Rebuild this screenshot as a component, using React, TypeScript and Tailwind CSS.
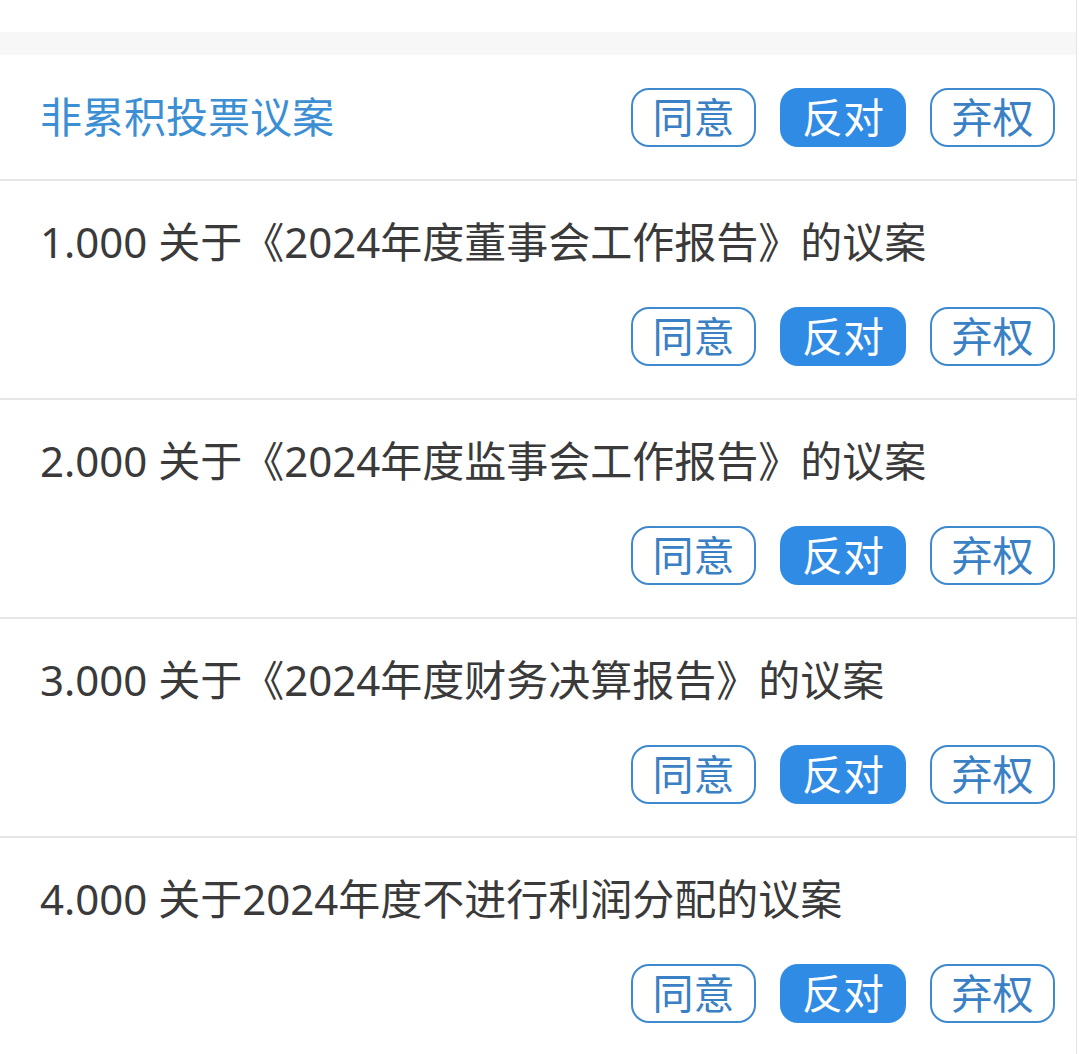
import React from 'react';

const font = { fontFamily: '"Noto Sans", "Noto Sans CJK SC", sans-serif' };

const proposals = [
  '1.000 关于《2024年度董事会工作报告》的议案',
  '2.000 关于《2024年度监事会工作报告》的议案',
  '3.000 关于《2024年度财务决算报告》的议案',
  '4.000 关于2024年度不进行利润分配的议案',
];

const VoteButtons = () => (
  <div className="flex items-center gap-[24px]">
    <div className="w-[125px] h-[59px] rounded-[18px] border-2 border-[#3f89cf] text-[#3a80c4] text-[41px] flex items-center justify-center leading-none">
      同意
    </div>
    <div className="w-[126px] h-[59px] rounded-[18px] bg-[#2f8be4] text-white text-[41px] flex items-center justify-center leading-none">
      反对
    </div>
    <div className="w-[125px] h-[59px] rounded-[18px] border-2 border-[#3f89cf] text-[#3a80c4] text-[41px] flex items-center justify-center leading-none">
      弃权
    </div>
  </div>
);

export default function App() {
  return (
    <div className="w-[1079px] h-[1054px] bg-white overflow-hidden" style={font}>
      <div className="w-[1077px] h-full border-r border-[#e4e4e4]">
        <div className="h-[32px] bg-white" />
        <div className="h-[23px] bg-[#f7f7f7]" />
        <div className="h-[126px] flex items-center justify-between pl-[40px] pr-[21px] border-b-2 border-[#e6e6e6]">
          <span className="text-[42px] text-[#3d8fd4] leading-none">非累积投票议案</span>
          <VoteButtons />
        </div>
        {proposals.map((p) => (
          <div key={p} className="pt-[31px] pb-[32px] border-b-2 border-[#e6e6e6]">
            <div className="pl-[40px] text-[42px] leading-[60px] text-[#3a3a3a] whitespace-nowrap">{p}</div>
            <div className="mt-[35px] flex justify-end pr-[21px]">
              <VoteButtons />
            </div>
          </div>
        ))}
      </div>
    </div>
  );
}
